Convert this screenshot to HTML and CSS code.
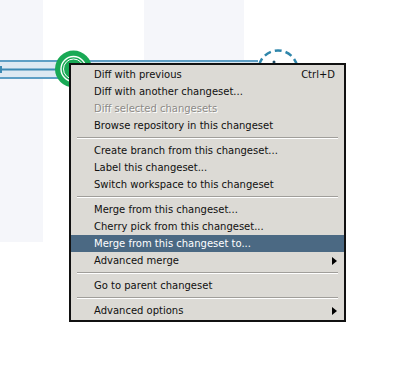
FILE: index.html
```html
<!DOCTYPE html>
<html>
<head>
  <meta charset="utf-8">
  <title>Changeset menu</title>
  <link rel="stylesheet" href="styles.css">
</head>
<body class="body">
  <div id="canvas">
    <svg class="graph" width="406" height="365" viewBox="0 0 406 365">
      <!-- columnas do fundo -->
      <rect x="0" y="0" width="43" height="242" fill="#f5f6fa"/>
      <rect x="144" y="0" width="100" height="242" fill="#f5f6fa"/>
      <!-- faixa da branch -->
      <rect x="0" y="61" width="258" height="18" fill="#dde9f2"/>
      <line x1="0" y1="61" x2="258" y2="61" stroke="#5e9fc5" stroke-width="2"/>
      <line x1="0" y1="78" x2="258" y2="78" stroke="#5e9fc5" stroke-width="2"/>
      <line x1="0" y1="69.5" x2="74" y2="69.5" stroke="#3d8ab3" stroke-width="2"/>
      <rect x="0" y="66" width="2" height="7" fill="#3d8ab3"/>
      <!-- changeset atual -->
      <circle cx="73.5" cy="69" r="18.5" fill="#19a955"/>
      <circle cx="73.5" cy="69" r="12.5" fill="none" stroke="#ffffff" stroke-width="1.4"/>
      <circle cx="73.5" cy="69" r="10" fill="none" stroke="#ffffff" stroke-width="1"/>
      <!-- changeset pendente -->
      <circle cx="278" cy="70" r="19.5" fill="#ffffff" stroke="#2f86ab" stroke-width="2.5" stroke-dasharray="7 4"/>
      <circle cx="274" cy="62" r="1.5" fill="#1f4d66"/>
    </svg>

    <div class="menu">
      <div class="item"><span>Diff with previous</span><span class="accel">Ctrl+D</span></div>
      <div class="item"><span>Diff with another changeset...</span></div>
      <div class="item disabled"><span>Diff selected changesets</span></div>
      <div class="item"><span>Browse repository in this changeset</span></div>
      <div class="sep"></div>
      <div class="item"><span>Create branch from this changeset...</span></div>
      <div class="item"><span>Label this changeset...</span></div>
      <div class="item"><span>Switch workspace to this changeset</span></div>
      <div class="sep"></div>
      <div class="item"><span>Merge from this changeset...</span></div>
      <div class="item"><span>Cherry pick from this changeset...</span></div>
      <div class="item active"><span>Merge from this changeset to...</span></div>
      <div class="item"><span>Advanced merge</span><span class="arrow"></span></div>
      <div class="sep"></div>
      <div class="item"><span>Go to parent changeset</span></div>
      <div class="sep"></div>
      <div class="item"><span>Advanced options</span><span class="arrow"></span></div>
    </div>
  </div>
</body>
</html>
```

FILE: styles.css
```css
.body {
  margin: 0;
  background-color: #ffffff;
  font-family: "DejaVu Sans", Verdana, sans-serif;
  font-size: 10px;
}

#canvas {
  position: relative;
  width: 406px;
  height: 365px;
  overflow: hidden;
}

.graph {
  display: block;
}

/* menu de contexto por cima do grafo */
.menu {
  position: absolute;
  left: 69px;
  top: 63px;
  width: 273px;
  padding: 1px 0 1px 0;
  border: 2px solid #111111;
  background-color: #dcdad5;
  color: #101010;
}

.item {
  display: flex;
  justify-content: space-between;
  align-items: center;
  height: 17px;
  line-height: 17px;
  padding-left: 23px;
  padding-right: 9px;
  white-space: nowrap;
}

.disabled {
  color: #8c8a87;
  text-shadow: 1px 1px 0 #ffffff;
}

.active {
  background-color: #4b6983;
  color: #ffffff;
}

.arrow {
  width: 0;
  height: 0;
  margin-right: -2px;
  border-top: 4px solid transparent;
  border-bottom: 4px solid transparent;
  border-left: 5px solid #000000;
}

.sep {
  height: 8px;
  margin: 0 6px;
  box-sizing: border-box;
  padding-top: 3px;
}

.sep::before {
  content: "";
  display: block;
  height: 1px;
  background-color: #a09e9a;
  border-bottom: 1px solid #ffffff;
}
```
